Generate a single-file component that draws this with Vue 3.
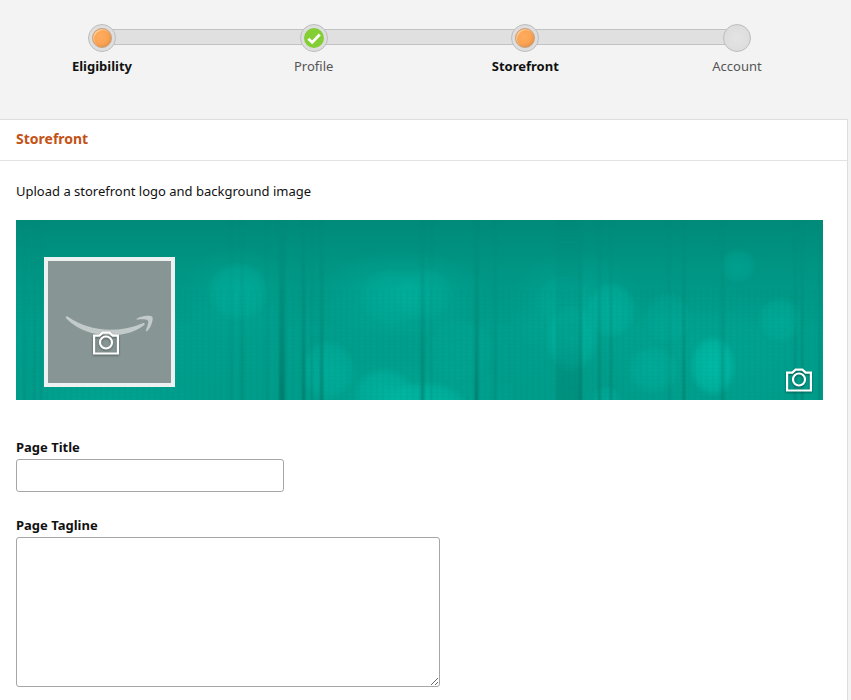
<script setup>
import { ref } from 'vue'

const steps = [
  { name: 'Eligibility', state: 'active' },
  { name: 'Profile', state: 'done' },
  { name: 'Storefront', state: 'active' },
  { name: 'Account', state: 'pending' }
]

const title = ref('')
const tagline = ref('')

// Wide, faint light areas behind the spots
const washes = [
  { x: 222, y: 76, rx: 60, ry: 50, o: 0.3 },
  { x: 385, y: 75, rx: 90, ry: 45, o: 0.5 },
  { x: 390, y: 175, rx: 110, ry: 40, o: 0.35 },
  { x: 560, y: 90, rx: 70, ry: 60, o: 0.4 },
  { x: 690, y: 130, rx: 120, ry: 60, o: 0.25 },
  { x: 90, y: 180, rx: 90, ry: 24, o: 0.3 }
]

// Soft light spots of the banner: centre, radii, opacity
const glows = [
  { x: 222, y: 72, rx: 31, ry: 30, o: 0.4 },
  { x: 312, y: 150, rx: 27, ry: 30, o: 0.5 },
  { x: 376, y: 78, rx: 34, ry: 30, o: 0.25 },
  { x: 408, y: 74, rx: 28, ry: 27, o: 0.25 },
  { x: 368, y: 174, rx: 30, ry: 26, o: 0.6 },
  { x: 408, y: 186, rx: 44, ry: 24, o: 0.75 },
  { x: 444, y: 130, rx: 36, ry: 32, o: 0.2 },
  { x: 556, y: 118, rx: 26, ry: 34, o: 0.6 },
  { x: 548, y: 82, rx: 30, ry: 28, o: 0.2 },
  { x: 595, y: 90, rx: 25, ry: 28, o: 0.5 },
  { x: 652, y: 98, rx: 24, ry: 26, o: 0.25 },
  { x: 637, y: 150, rx: 26, ry: 24, o: 0.4 },
  { x: 697, y: 146, rx: 23, ry: 30, o: 1 },
  { x: 722, y: 46, rx: 18, ry: 17, o: 0.3 },
  { x: 764, y: 100, rx: 22, ry: 23, o: 0.4 },
  { x: 590, y: 178, rx: 14, ry: 12, o: 0.4 }
]

// Vertical folds of the banner: left edge, width, opacity
const folds = [
  { x: 8, w: 2, o: 0.3 }, { x: 17, w: 2, o: 0.3 }, { x: 24, w: 2, o: 0.25 },
  { x: 214, w: 2, o: 0.35 }, { x: 225, w: 2, o: 0.55 }, { x: 250, w: 2, o: 0.3 },
  { x: 263, w: 6, o: 0.8 }, { x: 286, w: 3, o: 0.8 }, { x: 295, w: 2, o: 0.35 },
  { x: 304, w: 3, o: 0.7 }, { x: 405, w: 3, o: 0.7 }, { x: 415, w: 1, o: 0.4 },
  { x: 459, w: 3, o: 0.9 }, { x: 478, w: 2, o: 0.5 }, { x: 540, w: 24, o: 0.35 },
  { x: 563, w: 3, o: 0.7 }, { x: 582, w: 3, o: 0.5 }, { x: 594, w: 2, o: 0.6 },
  { x: 652, w: 2, o: 0.3 }, { x: 667, w: 2, o: 0.8 }, { x: 705, w: 3, o: 0.5 },
  { x: 778, w: 2, o: 0.6 }, { x: 785, w: 2, o: 0.6 }, { x: 802, w: 3, o: 0.4 }
]
</script>

<template>
  <div class="page">
    <nav class="progress" aria-label="Registration progress">
      <div class="track"></div>
      <ol class="steps">
        <li v-for="step in steps" :key="step.name" class="step" :class="step.state">
          <span class="marker">
            <span v-if="step.state !== 'pending'" class="dot">
              <svg v-if="step.state === 'done'" viewBox="0 0 20 20" width="20" height="20" aria-hidden="true">
                <path d="M4.3 10.8 8.2 14.4 15.8 6.6" fill="none" stroke="#fff" stroke-width="2.8" />
              </svg>
            </span>
          </span>
          <span class="name">{{ step.name }}</span>
        </li>
      </ol>
    </nav>

    <main class="card">
      <h1 class="heading">Storefront</h1>
      <form class="body" @submit.prevent>
        <p class="intro">Upload a storefront logo and background image</p>

        <div class="banner">
          <svg class="art" viewBox="0 0 807 180" preserveAspectRatio="none" aria-hidden="true">
            <defs>
              <linearGradient id="base" x1="0" y1="0" x2="0" y2="1">
                <stop offset="0" stop-color="#008a79" />
                <stop offset="0.25" stop-color="#009483" />
                <stop offset="0.6" stop-color="#009e8c" />
                <stop offset="1" stop-color="#009d8b" />
              </linearGradient>
              <linearGradient id="fold" x1="0" y1="0" x2="0" y2="1">
                <stop offset="0.05" stop-color="#007f70" stop-opacity="0.1" />
                <stop offset="0.5" stop-color="#007f70" stop-opacity="0.6" />
                <stop offset="1" stop-color="#007868" />
              </linearGradient>
              <radialGradient id="wash">
                <stop offset="0" stop-color="#00b5a0" />
                <stop offset="1" stop-color="#00b5a0" stop-opacity="0" />
              </radialGradient>
              <radialGradient id="glow">
                <stop offset="0" stop-color="#00bca8" stop-opacity="0.9" />
                <stop offset="0.75" stop-color="#00bca8" stop-opacity="0.6" />
                <stop offset="1" stop-color="#00bca8" stop-opacity="0.1" />
              </radialGradient>
              <pattern id="weave" width="6" height="4" patternUnits="userSpaceOnUse">
                <rect width="2" height="4" fill="#007f70" opacity="0.07" />
                <rect width="6" height="1" fill="#007f70" opacity="0.04" />
              </pattern>
              <filter id="soft" x="-5%" width="110%"><feGaussianBlur stdDeviation="0.8 0" /></filter>
              <filter id="haze"><feGaussianBlur stdDeviation="1.8" /></filter>
            </defs>
            <rect width="807" height="180" fill="url(#base)" />
            <ellipse v-for="(g, i) in washes" :key="'w' + i" :cx="g.x" :cy="g.y" :rx="g.rx" :ry="g.ry" :opacity="g.o" fill="url(#wash)" />
            <g filter="url(#haze)">
              <ellipse v-for="(g, i) in glows" :key="'g' + i" :cx="g.x" :cy="g.y" :rx="g.rx" :ry="g.ry" :opacity="g.o" fill="url(#glow)" />
            </g>
            <rect y="70" width="807" height="110" fill="url(#weave)" />
            <g filter="url(#soft)">
              <rect v-for="(f, i) in folds" :key="'f' + i" :x="f.x" y="0" :width="f.w" height="180" :opacity="f.o" fill="url(#fold)" />
            </g>
          </svg>

          <button type="button" class="logo" aria-label="Upload logo">
            <svg class="smile" viewBox="4 4 123 122" aria-hidden="true">
              <g fill="#c2cbca">
                <path d="M22 59.5C21.4 60.7 22 61.3 23 62.2C34 72.5 49 78.4 66 78.4C80 78.4 92 74.6 100 68.3C101.6 67 100.6 65.4 98.8 66.2C88 70.8 77 72.8 66 72.8C50 72.8 36 68 24 59.8C23.1 59.1 22.4 59 22 59.5Z" />
                <path d="M92.7 61.8C96 59.2 105.5 57.6 108 59.6C110 61.4 107.4 70 103.6 73.8C102.6 74.6 101.6 74.2 102 73C103.2 70 105 65 104 63.6C103 62.2 97 62.2 93.8 62.6C92.5 62.8 92.1 62.3 92.7 61.8Z" />
              </g>
            </svg>
            <svg class="camera logo-camera" viewBox="0 0 26 24" width="26" height="24" aria-hidden="true">
              <path d="M1.1 4.6H6.4L9.6 1.6H16.4L19.6 4.6H24.9V22.5H1.1Z" />
              <circle cx="13" cy="11.5" r="6" />
            </svg>
          </button>

          <button type="button" class="background" aria-label="Upload background image">
            <svg class="camera" viewBox="0 0 26 24" width="26" height="24" aria-hidden="true">
              <path d="M1.1 4.6H6.4L9.6 1.6H16.4L19.6 4.6H24.9V22.5H1.1Z" />
              <circle cx="13" cy="11.5" r="6" />
            </svg>
          </button>
        </div>

        <div class="field">
          <label for="page-title">Page Title</label>
          <input id="page-title" v-model="title" type="text" />
        </div>
        <div class="field">
          <label for="page-tagline">Page Tagline</label>
          <textarea id="page-tagline" v-model="tagline"></textarea>
        </div>
      </form>
    </main>
  </div>
</template>

<style>
body {
  background: #f3f3f3;
}
</style>

<style scoped>
.page {
  display: flex;
  flex-direction: column;
  min-height: 100vh;
  font-family: "Noto Sans", "Open Sans", sans-serif;
  font-size: 13px;
  line-height: 20px;
  color: #111;
}
.page,
.page * {
  box-sizing: border-box;
}
.progress {
  display: grid;
  padding: 24px 74px 43px 62px;
}
.track {
  grid-area: 1 / 1;
  height: 16px;
  margin: 5px 40px 0;
  background: #e0e0e0;
  border: 1px solid #c2c2c2;
}
.steps {
  grid-area: 1 / 1;
  display: flex;
  justify-content: space-between;
  margin: 0;
  padding: 0;
  list-style: none;
}
.step {
  display: flex;
  flex-direction: column;
  align-items: center;
  gap: 4px;
  width: 80px;
  color: #555;
}
.step.active {
  color: #111;
  font-weight: 700;
}
.marker {
  display: grid;
  place-items: center;
  width: 28px;
  height: 28px;
  border: 1px solid #bdbdbd;
  border-radius: 50%;
  background: #dedede;
}
.pending .marker {
  background: radial-gradient(circle, #e4e4e4, #dadada);
}
.dot {
  display: grid;
  width: 20px;
  height: 20px;
  border-radius: 50%;
}
.active .dot {
  border: 1px solid #c9a078;
  background: radial-gradient(circle at 42% 40%, #ffac60 0, #fba352 50%, #cf8548 100%);
  box-shadow: inset 1px 1px 1px #ffcf9f;
}
.done .dot {
  background: #82ce34;
}
.card {
  flex: 1;
  margin-right: 3px;
  background: #fff;
  border: 1px solid #ddd;
  border-width: 1px 1px 0 0;
}
.heading {
  margin: 0;
  padding: 9px 16px 11px;
  border-bottom: 1px solid #e2e4e4;
  font-size: 14px;
  line-height: 20px;
  font-weight: 700;
  color: #c45215;
}
.body {
  padding: 20px 24px 12px 16px;
}
.intro {
  margin: 0 0 19px;
}
.banner {
  position: relative;
  display: flex;
  justify-content: space-between;
  align-items: flex-end;
  height: 180px;
  margin-bottom: 37px;
  padding: 0 11px 8px 28px;
}
.art {
  position: absolute;
  inset: 0;
  width: 100%;
  height: 100%;
}
.logo,
.background {
  position: relative;
  padding: 0;
  border: 0;
  background: none;
  cursor: pointer;
}
.logo {
  width: 131px;
  height: 130px;
  margin-bottom: 5px;
  border: 4px solid #eef1f1;
  background: #879695;
}
.smile {
  display: block;
  width: 100%;
  height: 100%;
}
.camera {
  display: block;
  fill: none;
  stroke: #fff;
  stroke-width: 2.2;
  filter: drop-shadow(0 1px 1px rgba(0, 0, 0, 0.4));
}
.logo-camera {
  position: absolute;
  left: 45px;
  bottom: 28px;
}
.field {
  display: flex;
  flex-direction: column;
  align-items: flex-start;
  gap: 2px;
}
.field + .field {
  margin-top: 23px;
}
.field label {
  font-weight: 700;
}
.field input,
.field textarea {
  max-width: 100%;
  margin: 0;
  padding: 4px 8px;
  border: 1px solid #a6a6a6;
  border-radius: 3px;
  background: #fff;
  font: inherit;
  color: inherit;
}
.field input {
  width: 268px;
  height: 33px;
}
.field textarea {
  width: 424px;
  height: 150px;
  resize: both;
}
</style>
